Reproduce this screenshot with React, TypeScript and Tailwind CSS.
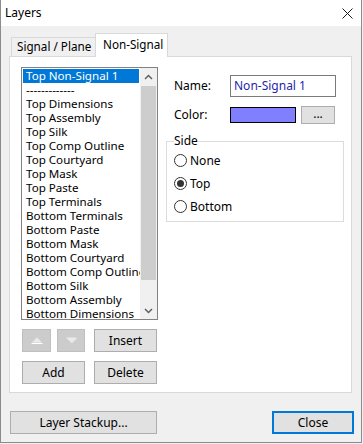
import React from 'react'

const layers = [
  'Top Non-Signal 1',
  '-------------',
  'Top Dimensions',
  'Top Assembly',
  'Top Silk',
  'Top Comp Outline',
  'Top Courtyard',
  'Top Mask',
  'Top Paste',
  'Top Terminals',
  'Bottom Terminals',
  'Bottom Paste',
  'Bottom Mask',
  'Bottom Courtyard',
  'Bottom Comp Outline',
  'Bottom Silk',
  'Bottom Assembly',
  'Bottom Dimensions',
]

const font = { fontFamily: '"Noto Sans", "Segoe UI", sans-serif' }

function Btn({ className, children }: { className: string; children?: React.ReactNode }) {
  return (
    <div className={'flex items-center justify-center bg-[#e1e1e1] border border-[#adadad] text-[12px] text-black ' + className}>
      {children}
    </div>
  )
}

function Radio({ label, checked }: { label: string; checked?: boolean }) {
  return (
    <div className="flex items-center h-[23px] gap-[3px]">
      <div className="w-[13px] h-[13px] rounded-full border border-[#333] bg-white flex items-center justify-center">
        {checked && <div className="w-[7px] h-[7px] rounded-full bg-[#333]" />}
      </div>
      <span>{label}</span>
    </div>
  )
}

export default function App() {
  return (
    <div className="w-[363px] h-[444px] bg-[#f0f0f0] text-[12px] text-black" style={font}>
      <div className="w-[362px] h-[443px] flex flex-col border-l border-r border-b border-[#8c8c8c] bg-[#f0f0f0]">
        {/* title bar */}
        <div className="h-[26px] bg-white flex items-center justify-between pl-[4px] pr-[8px]">
          <span className="text-[12px]">Layers</span>
          <svg width="11" height="11" viewBox="0 0 11 11">
            <path d="M0.5 0.5 L10.5 10.5 M10.5 0.5 L0.5 10.5" stroke="#1a1a1a" strokeWidth="1" />
          </svg>
        </div>

        <div className="px-[8px] flex flex-col">
          {/* tabs */}
          <div className="flex items-end h-[24px] mt-[7px] mb-[-1px] ml-[2px] relative z-10">
            <div className="h-[19px] mb-[1px] w-[84px] border-t border-l border-[#d9d9d9] bg-[#f0f0f0] flex items-center pl-[5px] pb-[1px] text-[11.7px]">
              Signal / Plane
            </div>
            <div className="h-[24px] w-[73px] border-t border-l border-r border-[#d9d9d9] bg-white flex items-center pl-[7px] pb-[2px] text-[11.7px]">
              Non-Signal
            </div>
          </div>

          {/* panel */}
          <div className="w-[343px] h-[337px] border border-[#d9d9d9] bg-white pt-[10px] pl-[11px] flex gap-[8px]">
            {/* left column */}
            <div className="w-[137px] flex flex-col">
              <div className="h-[253px] border border-[#828282] flex">
                <div className="flex-1 overflow-hidden pt-[1px] px-[1px] text-[11.6px]">
                  {layers.map((l, i) => (
                    <div
                      key={l}
                      className={
                        'h-[14px] leading-[14px] pl-[3px] whitespace-nowrap ' +
                        (i === 0 ? 'bg-[#0078d7] text-white' : '')
                      }
                    >
                      {l}
                    </div>
                  ))}
                </div>
                <div className="w-[17px] bg-[#f0f0f0] flex flex-col">
                  <div className="h-[17px] flex items-center justify-center">
                    <svg width="9" height="6" viewBox="0 0 9 6">
                      <path d="M1 5 L4.5 1.5 L8 5" stroke="#606060" strokeWidth="1.5" fill="none" />
                    </svg>
                  </div>
                  <div className="h-[194px] mt-[1px] mx-[1px] bg-[#cdcdcd]" />
                  <div className="flex-1" />
                  <div className="h-[17px] flex items-center justify-center">
                    <svg width="9" height="6" viewBox="0 0 9 6">
                      <path d="M1 1 L4.5 4.5 L8 1" stroke="#606060" strokeWidth="1.5" fill="none" />
                    </svg>
                  </div>
                </div>
              </div>

              <div className="flex mt-[9px] ml-[1px]">
                <div className="w-[29px] h-[23px] bg-[#cccccc] border border-[#bfbfbf] flex items-center justify-center">
                  <svg width="12" height="7" viewBox="0 0 12 7">
                    <path d="M1 5.5 L6 0.5 L11 5.5 Z" fill="#ebebeb" />
                    <path d="M0.5 6.5 L11.5 6.5" stroke="#ffffff" strokeWidth="1" />
                  </svg>
                </div>
                <div className="w-[28px] h-[23px] ml-[6px] bg-[#cccccc] border border-[#bfbfbf] flex items-center justify-center">
                  <svg width="12" height="7" viewBox="0 0 12 7">
                    <path d="M1 0.5 L11 0.5 L6 5.5 Z" fill="#ebebeb" />
                    <path d="M6.5 6 L11.5 1" stroke="#ffffff" strokeWidth="1" />
                  </svg>
                </div>
                <Btn className="w-[63px] h-[23px] ml-[9px]">Insert</Btn>
              </div>
              <div className="flex mt-[9px] ml-[1px]">
                <Btn className="w-[63px] h-[23px]">Add</Btn>
                <Btn className="w-[63px] h-[23px] ml-[9px]">Delete</Btn>
              </div>
            </div>

            {/* right column */}
            <div className="w-[178px] flex flex-col mt-[8px]">
              <div className="flex items-center h-[22px]">
                <span className="w-[64px] pl-[8px]">Name:</span>
                <div className="w-[106px] h-[22px] border border-[#7a7a7a] bg-white flex items-center pl-[3px] text-[#1f1fb0]">
                  Non-Signal 1
                </div>
              </div>
              <div className="flex items-center h-[18px] mt-[9px]">
                <span className="w-[64px] pl-[8px]">Color:</span>
                <div className="w-[66px] h-[16px] border border-black bg-[#8080ff]" />
                <Btn className="w-[34px] h-[18px] ml-[5px] pb-[2px]">...</Btn>
              </div>

              <fieldset className="mt-[9px] w-[178px] h-[89px] border border-[#dcdcdc] pl-[7px]">
                <legend className="leading-[16px] px-0">Side</legend>
                <Radio label="None" />
                <Radio label="Top" checked />
                <Radio label="Bottom" />
              </fieldset>
            </div>
          </div>

          {/* bottom buttons */}
          <div className="flex justify-between mt-[18px]">
            <Btn className="w-[147px] h-[23px] ml-[1px]">Layer Stackup...</Btn>
            <div className="w-[82px] h-[23px] mr-[-1px] bg-[#e1e1e1] border-2 border-[#0078d7] flex items-center justify-center">
              Close
            </div>
          </div>
        </div>
      </div>
    </div>
  )
}
